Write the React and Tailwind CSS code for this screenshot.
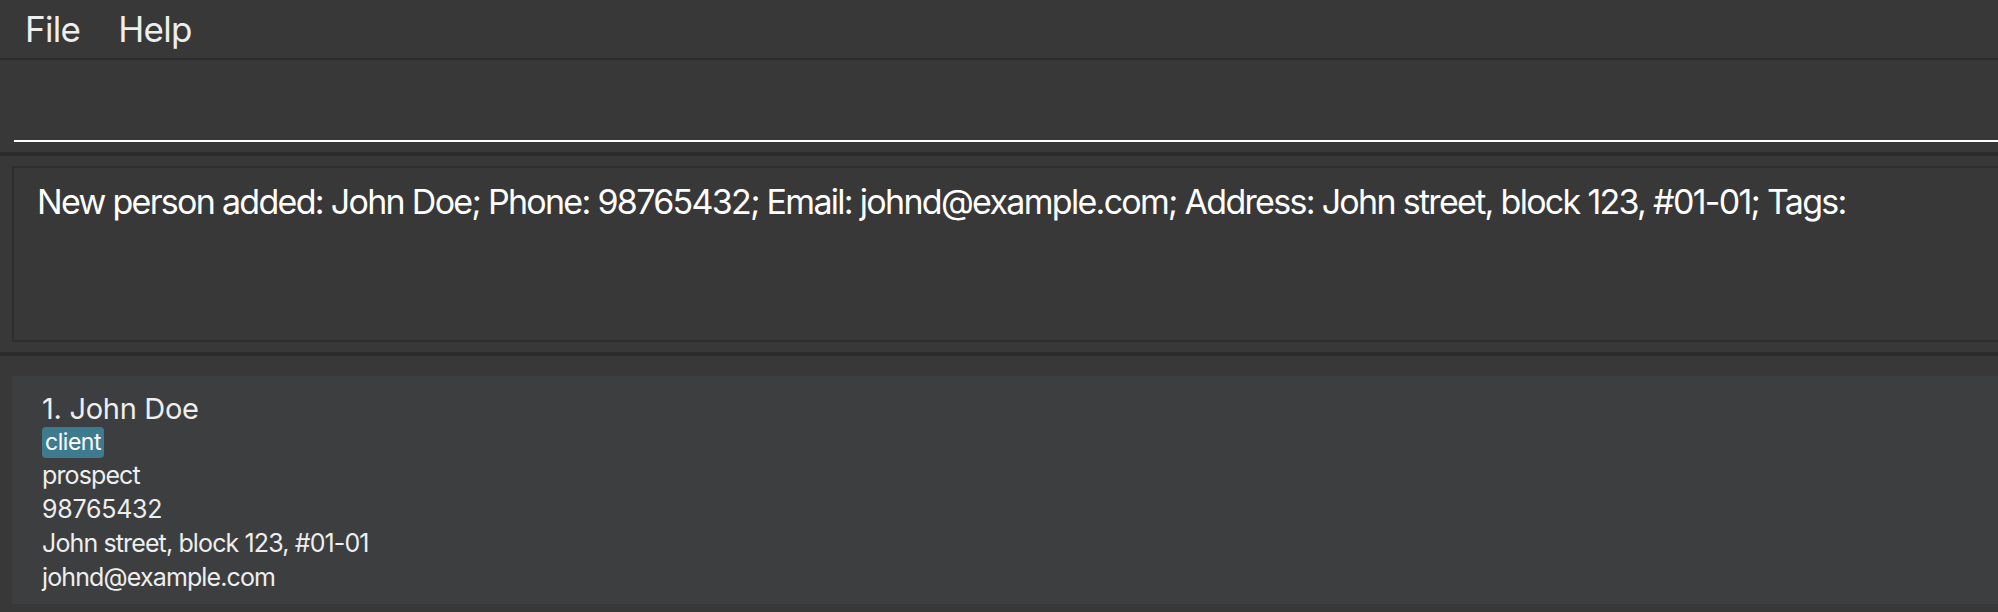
export default function App() {
  return (
    <div className="w-[1998px] h-[612px] overflow-hidden bg-[#383838] flex flex-col" style={{ fontFamily: "Inter, 'Noto Sans', sans-serif" }}>
      {/* Menu bar */}
      <div className="h-[60px] flex items-center border-b-2 border-[#2b2b2b] bg-[#383838] text-[#eeeeee] text-[35px] leading-[60px] tracking-[-0.02em] shrink-0">
        <span className="ml-[25px]">File</span>
        <span className="ml-[38px]">Help</span>
      </div>
      {/* Command box */}
      <div className="h-[92px] shrink-0 pl-[14px] pb-[10px] flex flex-col justify-end">
        <div className="h-[2px] bg-white w-full" />
      </div>
      <div className="h-[4px] bg-[#2b2b2b] shrink-0" />
      {/* Result display */}
      <div className="h-[196px] shrink-0 pl-[12px] py-[10px]">
        <div className="h-full border-2 border-r-0 border-[#2e2e2e] pl-[23px] pt-[12px] text-white text-[34px] leading-[44px] tracking-[-0.05em] whitespace-nowrap">
          New person added: John Doe; Phone: 98765432; Email: johnd@example.com; Address: John street, block 123, #01-01; Tags:
        </div>
      </div>
      <div className="h-[4px] bg-[#2b2b2b] shrink-0" />
      {/* List */}
      <div className="flex-1 pt-[20px] pl-[12px]">
        <div className="bg-[#3c3e3f] h-[228px] pl-[30px] pt-[15px] text-[#eeeeee]">
          <div className="text-[29px] leading-[35px] tracking-[-0.01em]">1. John Doe</div>
          <div className="flex mt-[1px]">
            <span className="bg-[#3e7b91] text-white text-[23px] leading-[27px] px-[3px] py-[2px] rounded-[4px] tracking-[-0.02em]">client</span>
          </div>
          <div className="text-[25px] leading-[34px] tracking-[-0.035em]">prospect</div>
          <div className="text-[25px] leading-[34px] tracking-[-0.01em]">98765432</div>
          <div className="text-[25px] leading-[34px] tracking-[-0.035em]">John street, block 123, #01-01</div>
          <div className="text-[25px] leading-[34px] tracking-[-0.035em]">johnd@example.com</div>
        </div>
      </div>
    </div>
  );
}
